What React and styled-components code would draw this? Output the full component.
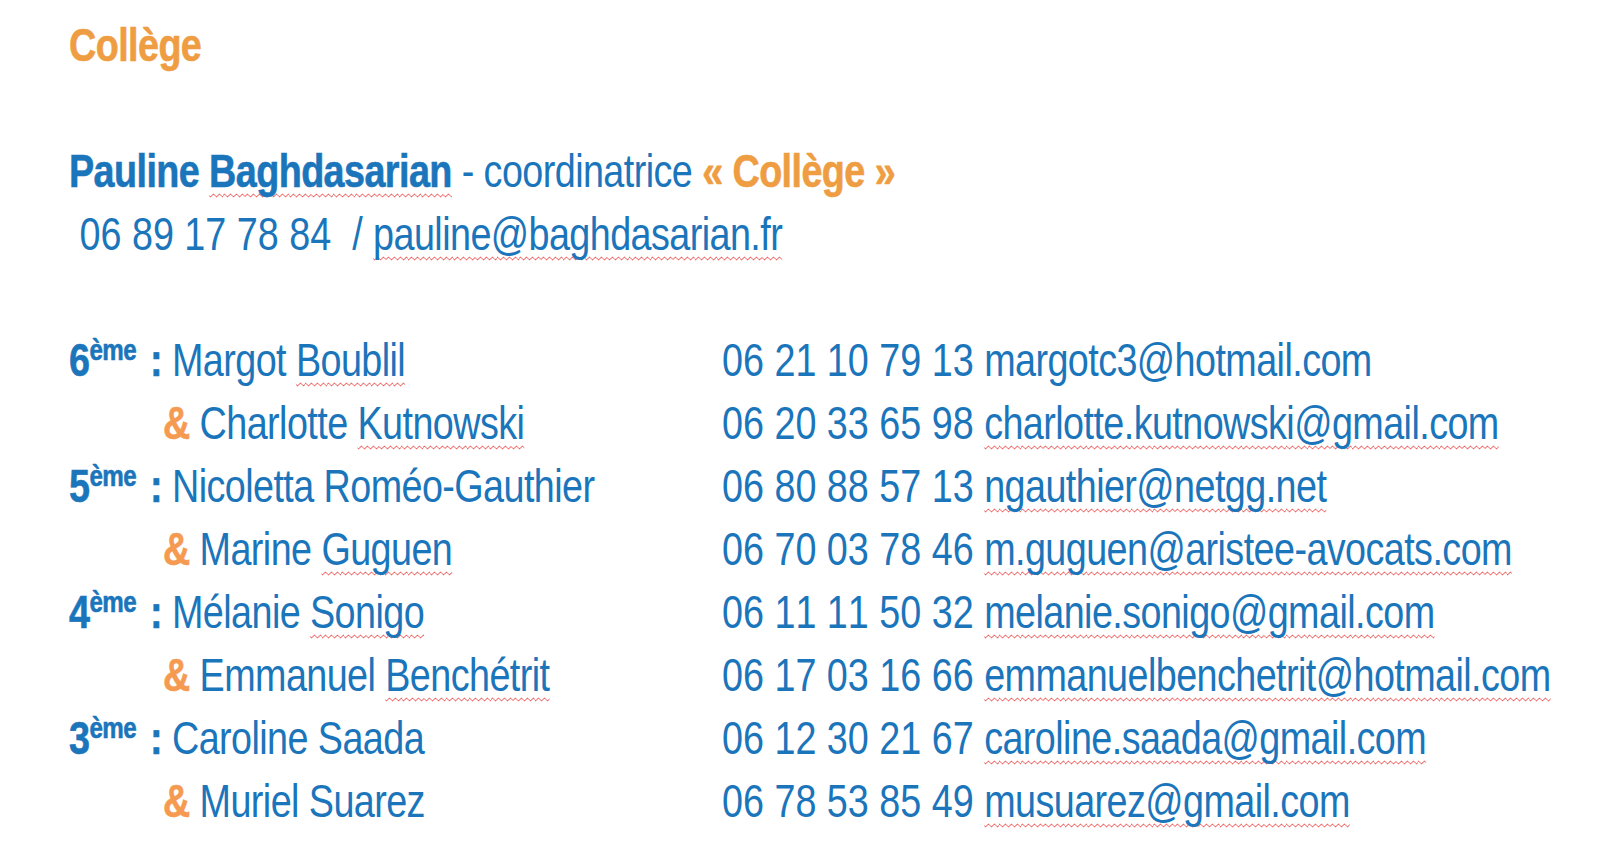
import React from 'react';
import styled, { createGlobalStyle } from 'styled-components';

const GlobalStyle = createGlobalStyle`
    html, body {
        margin: 0;
        padding: 0;
        background: #fff;
        overflow: hidden;
    }
`;

// no condensed face is installed, so the whole sheet is narrowed to mimic one
const NARROW = 0.82;

const Page = styled.div`
    padding: 14px 0 0 ${69 / NARROW}px;
    font-family: "Liberation Sans", Arial, sans-serif;
    font-size: 46px;
    line-height: 63px;
    letter-spacing: -0.015em;
    color: #1b75bb;
    white-space: pre;
    transform: scaleX(${NARROW});
    transform-origin: 0 0;
`;

const Title = styled.div`
    font-weight: bold;
    color: #ef9d42;
    -webkit-text-stroke: 0.6px currentColor;
`;

const Line = styled.div`
    min-height: 63px;
`;

const Bold = styled.span`
    font-weight: bold;
    -webkit-text-stroke: 0.6px currentColor;
`;

const Orange = styled(Bold)`
    color: #ef9d42;
`;

const Amp = styled(Bold)`
    color: #f59a50;
`;

const Phone = styled.span`
    letter-spacing: 0;
    font-kerning: none;
`;

const Spell = styled.span`
    text-decoration: underline wavy #e8312f;
    text-decoration-thickness: 1px;
    text-decoration-skip-ink: none;
    text-underline-offset: 6px;
`;

const Table = styled.div`
    display: grid;
    grid-template-columns: ${653 / NARROW}px auto;
`;

const Cell = styled.div`
    padding-left: ${p => (p.$partner ? `${94 / NARROW}px` : '0')};
`;

const Sup = styled.sup`
    font-size: 0.64em;
    line-height: 0;
    vertical-align: 0.55em;
    margin-right: 5px;
`;

const rows = [
    { level: '6', first: 'Margot', last: 'Boublil', phone: '06 21 10 79 13', email: 'margotc3@hotmail.com', ok: true },
    { first: 'Charlotte', last: 'Kutnowski', phone: '06 20 33 65 98', email: 'charlotte.kutnowski@gmail.com' },
    { level: '5', first: 'Nicoletta Roméo-Gauthier', phone: '06 80 88 57 13', email: 'ngauthier@netgg.net' },
    { first: 'Marine', last: 'Guguen', phone: '06 70 03 78 46', email: 'm.guguen@aristee-avocats.com' },
    { level: '4', first: 'Mélanie', last: 'Sonigo', phone: '06 11 11 50 32', email: 'melanie.sonigo@gmail.com' },
    { first: 'Emmanuel', last: 'Benchétrit', phone: '06 17 03 16 66', email: 'emmanuelbenchetrit@hotmail.com' },
    { level: '3', first: 'Caroline Saada', phone: '06 12 30 21 67', email: 'caroline.saada@gmail.com' },
    { first: 'Muriel Suarez', phone: '06 78 53 85 49', email: 'musuarez@gmail.com' },
];

function renderRows(arr) {
    return arr.map((row, i) => {
        const name = (
            <>
                {row.first}
                {row.last ? ' ' : ''}
                {row.last && <Spell>{row.last}</Spell>}
            </>
        );

        return (
            <React.Fragment key={i}>
                {row.level ? (
                    <Cell>
                        <Bold>{row.level}<Sup>ème</Sup> :</Bold> {name}
                    </Cell>
                ) : (
                    <Cell $partner>
                        <Amp>&amp;</Amp> {name}
                    </Cell>
                )}
                <Cell>
                    <Phone>{row.phone} </Phone>
                    {row.ok ? row.email : <Spell>{row.email}</Spell>}
                </Cell>
            </React.Fragment>
        );
    });
}

export default function App() {
    return (
        <Page>
            <GlobalStyle />
            <Title>Collège</Title>
            <Line />
            <Line>
                <Bold>Pauline <Spell>Baghdasarian</Spell></Bold> - coordinatrice <Orange>« Collège »</Orange>
            </Line>
            <Line>
                <Phone>{' 06 89 17 78 84  / '}</Phone>
                <Spell>pauline@baghdasarian.fr</Spell>
            </Line>
            <Line />
            <Table>{renderRows(rows)}</Table>
        </Page>
    );
}
